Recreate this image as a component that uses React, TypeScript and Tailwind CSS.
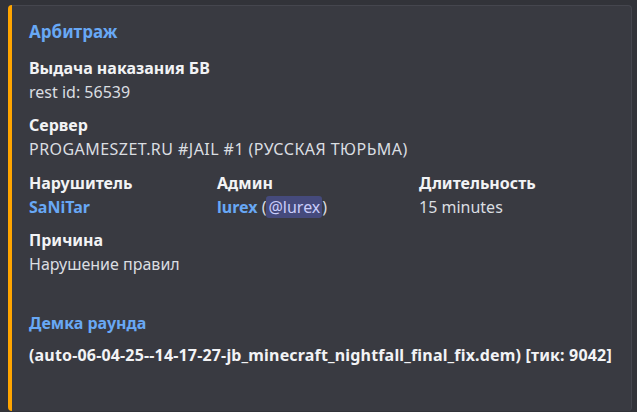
const font = { fontFamily: '"Noto Sans", "Open Sans", sans-serif' };

function Field({ name, children, className = "" }: { name: string; children: React.ReactNode; className?: string }) {
  return (
    <div className={"flex flex-col " + className}>
      <div className="text-[16px] font-bold leading-[24px] text-[#f2f3f5]">{name}</div>
      <div className="text-[16px] leading-[24px] text-[#dbdee1]">{children}</div>
    </div>
  );
}

export default function App() {
  return (
    <div className="w-[637px] h-[412px] bg-[#323339] pt-[5px] pl-[8px] pr-[5px] overflow-hidden" style={font}>
      <div className="h-[406px] flex rounded-[4px] bg-[#393a41] border-t border-r border-[#45464e]">
        <div className="w-[4px] shrink-0 bg-[#ffa500] rounded-l-[4px] -mt-px" />
        <div className="flex flex-col pl-[17px] pt-[14px]">
          <div className="text-[17px] font-bold leading-[24px] text-[#68a8f5]">Арбитраж</div>
          <div className="flex flex-col gap-[9px] mt-[12px]">
            <Field name="Выдача наказания БВ">rest id: 56539</Field>
            <Field name="Сервер">
              <span className="tracking-[0.45px]">PROGAMESZET.RU #JAIL #1 (РУССКАЯ ТЮРЬМА)</span>
            </Field>
            <div className="flex mt-px">
              <Field name="Нарушитель" className="w-[188px]">
                <span className="font-bold text-[#68a8f5]">SaNiTar</span>
              </Field>
              <Field name="Админ" className="w-[202px]">
                <span className="font-bold text-[#68a8f5]">lurex</span> (
                <span className="bg-[#454a7c] text-[#c9cdfb] rounded-[3px] px-[2px]">@lurex</span>)
              </Field>
              <Field name="Длительность">15 minutes</Field>
            </div>
            <Field name="Причина">Нарушение правил</Field>
          </div>
          <div className="mt-[35px] text-[16px] font-bold leading-[24px] text-[#68a8f5]">Демка раунда</div>
          <div className="mt-[8px] text-[16px] font-bold leading-[24px] tracking-[0.17px] text-[#f2f3f5]">
            (auto-06-04-25--14-17-27-jb_minecraft_nightfall_final_fix.dem) [тик: 9042]
          </div>
        </div>
      </div>
    </div>
  );
}
